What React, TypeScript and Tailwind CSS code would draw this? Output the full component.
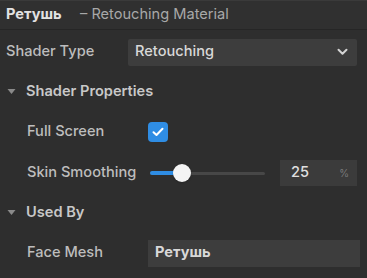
import React from 'react';

function Caret() {
  return (
    <svg width="9" height="7" viewBox="0 0 9 7" className="shrink-0">
      <path d="M0.5 1 L8.5 1 L4.5 6 Z" fill="#8a8a8a" />
    </svg>
  );
}

function Chevron() {
  return (
    <svg width="11" height="8" viewBox="0 0 11 8">
      <path d="M1.5 1.8 L5.5 5.8 L9.5 1.8" fill="none" stroke="#d4d4d4" strokeWidth="2" strokeLinecap="round" strokeLinejoin="round" />
    </svg>
  );
}

function Row({ children }: { children: React.ReactNode }) {
  return <div className="h-[40px] flex items-center">{children}</div>;
}

export default function App() {
  return (
    <div
      className="w-[367px] h-[278px] bg-[#2e2e2e] text-[#bdbdbd] text-[14.6px] overflow-hidden"
      style={{ fontFamily: 'Inter, "Noto Sans", sans-serif' }}
    >
      <div className="h-[30px] border-b border-[#262626] bg-[#303030] flex items-center px-[6px] border-t border-t-[#3a3a3a]">
        <span className="font-bold text-[#e2e2e2] w-[74px]">Ретушь</span>
        <span className="text-[#a8a8a8]">– Retouching Material</span>
      </div>

      <div className="h-[2px]" />

      <Row>
        <span className="pl-[6px] w-[128px] shrink-0 font-medium">Shader Type</span>
        <div className="w-[229px] h-[27px] bg-[#3d3d3d] flex items-center justify-between pl-[7px] pr-[9px] rounded-[2px]">
          <span className="text-[#d8d8d8] font-medium">Retouching</span>
          <Chevron />
        </div>
      </Row>

      <Row>
        <div className="pl-[7px] flex items-center gap-[10px]">
          <Caret />
          <span className="font-semibold text-[#c8c8c8]">Shader Properties</span>
        </div>
      </Row>

      <Row>
        <span className="pl-[27px] w-[148px] shrink-0 font-medium">Full Screen</span>
        <div className="w-[20px] h-[20px] rounded-[4px] bg-[#2f8de4] flex items-center justify-center">
          <svg width="12" height="10" viewBox="0 0 12 10">
            <path d="M1.5 5.2 L4.5 8 L10.5 1.8" fill="none" stroke="#fff" strokeWidth="2" strokeLinecap="round" strokeLinejoin="round" />
          </svg>
        </div>
      </Row>

      <div className="h-[41px] flex items-center pt-[1px]">
        <span className="pl-[27px] w-[150px] shrink-0 font-medium">Skin Smoothing</span>
        <div className="relative w-[115px] h-[20px] flex items-center">
          <div className="w-full h-[3px] bg-[#474747] rounded-full" />
          <div className="absolute left-0 top-[8px] w-[32px] h-[4px] bg-[#2f8de4] rounded-full" />
          <div className="absolute left-[23px] top-[1px] w-[18px] h-[18px] rounded-full bg-[#f4f4f4] shadow" />
        </div>
        <div className="ml-[15px] w-[77px] h-[26px] bg-[#3b3b3b] flex items-center justify-between pl-[11px] pr-[8px]">
          <span className="text-[#e0e0e0] font-medium">25</span>
          <span className="text-[10px] text-[#7a7a7a]">%</span>
        </div>
      </div>

      <Row>
        <div className="pl-[7px] flex items-center gap-[10px]">
          <Caret />
          <span className="font-semibold text-[#c8c8c8]">Used By</span>
        </div>
      </Row>

      <Row>
        <span className="pl-[27px] w-[148px] shrink-0 font-medium">Face Mesh</span>
        <div className="w-[212px] h-[27px] bg-[#3d3d3d] flex items-center pl-[7px]">
          <span className="font-bold text-[#d8d8d8]">Ретушь</span>
        </div>
      </Row>
    </div>
  );
}
